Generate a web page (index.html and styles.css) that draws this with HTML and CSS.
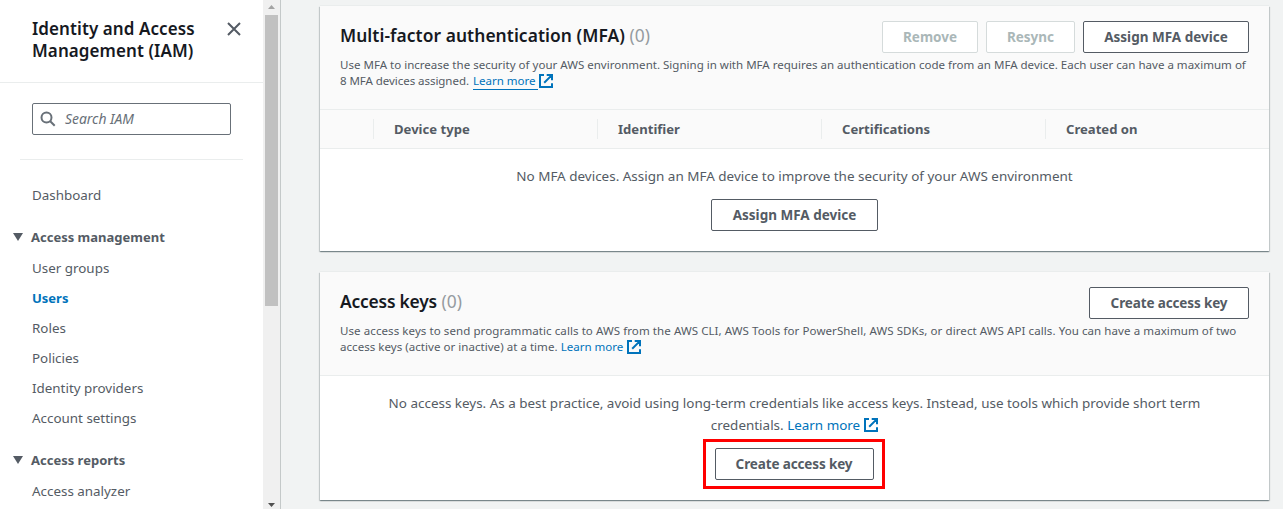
FILE: index.html
```html
<!DOCTYPE html>
<html lang="en">
<head>
<meta charset="utf-8">
<title>IAM</title>
<link rel="stylesheet" href="styles.css">
</head>
<body>
<svg class="defs" width="0" height="0">
  <symbol id="external" viewBox="0 0 14 14">
    <path d="M5 1H1v12h12V9.3M7.7 1H13v5.3M12.6 1.4L5.2 8.8" fill="none" stroke="currentColor" stroke-width="2"/>
  </symbol>
</svg>
<div class="app">
  <nav class="sidebar">
    <header class="side-head">
      <h2 class="side-title">Identity and Access<br>Management (IAM)</h2>
      <svg class="close" viewBox="0 0 14 14"><path d="M1 1l12 12M13 1L1 13" fill="none" stroke="#545b64" stroke-width="2"/></svg>
    </header>
    <div class="search">
      <svg class="search-icon" viewBox="0 0 16 16"><circle cx="6.5" cy="6.5" r="5" fill="none" stroke="#687078" stroke-width="2"/><path d="M10 10l4.7 4.7" stroke="#687078" stroke-width="2"/></svg>
      <span class="placeholder">Search IAM</span>
    </div>
    <hr class="divider">
    <a class="link dashboard">Dashboard</a>
    <div class="group"><i class="caret"></i><span>Access management</span></div>
    <a class="link">User groups</a>
    <a class="link active">Users</a>
    <a class="link">Roles</a>
    <a class="link">Policies</a>
    <a class="link">Identity providers</a>
    <a class="link">Account settings</a>
    <div class="group"><i class="caret"></i><span>Access reports</span></div>
    <a class="link">Access analyzer</a>
  </nav>
  <div class="scrollbar">
    <svg class="arrow" viewBox="0 0 7 4"><path d="M0 4h7L3.5 0z" fill="#a3a3a3"/></svg>
    <div class="thumb"></div>
    <svg class="arrow" viewBox="0 0 7 4"><path d="M0 0h7L3.5 4z" fill="#505050"/></svg>
  </div>
  <main class="main">
    <section class="card mfa">
      <header class="card-head">
        <div class="head-row">
          <h2 class="title"><span class="t-mfa">Multi-factor authentication (MFA)</span> <span class="count">(0)</span></h2>
          <div class="actions">
            <button class="btn disabled b-remove">Remove</button>
            <button class="btn disabled b-resync">Resync</button>
            <button class="btn b-assign">Assign MFA device</button>
          </div>
        </div>
        <p class="desc"><span class="d1">Use MFA to increase the security of your AWS environment. Signing in with MFA requires an authentication code from an MFA device. Each user can have a maximum of</span><br><span class="d2">8 MFA devices assigned. </span><a class="more underlined">Learn more</a><svg class="ext ext-tight"><use href="#external"/></svg></p>
      </header>
      <div class="table-head">
        <span class="cell"></span>
        <span class="cell">Device type</span>
        <span class="cell">Identifier</span>
        <span class="cell">Certifications</span>
        <span class="cell">Created on</span>
      </div>
      <div class="empty">
        <p class="empty-text">No MFA devices. Assign an MFA device to improve the security of your AWS environment</p>
        <button class="btn b-assign-lg">Assign MFA device</button>
      </div>
    </section>
    <section class="card keys">
      <header class="card-head">
        <div class="head-row">
          <h2 class="title"><span class="t-keys">Access keys</span> <span class="count">(0)</span></h2>
          <div class="actions"><button class="btn b-create">Create access key</button></div>
        </div>
        <p class="desc"><span class="d3">Use access keys to send programmatic calls to AWS from the AWS CLI, AWS Tools for PowerShell, AWS SDKs, or direct AWS API calls. You can have a maximum of two</span><br><span class="d4">access keys (active or inactive) at a time. </span><a class="more">Learn more</a><svg class="ext"><use href="#external"/></svg></p>
      </header>
      <div class="empty keys-empty">
        <p class="empty-text">No access keys. As a best practice, avoid using long-term credentials like access keys. Instead, use tools which provide short term<br>credentials. <a class="more">Learn more</a><svg class="ext"><use href="#external"/></svg></p>
        <div class="highlight"><button class="btn b-create-lg">Create access key</button></div>
      </div>
    </section>
  </main>
</div>
</body>
</html>
```
FILE: styles.css
```css
* { box-sizing: border-box; }
body {
  margin: 0;
  background: #f1f3f3;
  color: #545b64;
  font: 14px/22px "Noto Sans", "Open Sans", sans-serif;
  overflow: hidden;
}
h2, p { margin: 0; }
.defs { position: absolute; }
.app { display: flex; height: 509px; }

.sidebar { width: 263px; flex: none; background: #fff; overflow: hidden; white-space: nowrap; font-size: 13.4px; }
.side-head { display: flex; justify-content: space-between; height: 83px; padding: 18px 22px 0 32px; border-bottom: 1px solid #eaeded; }
.side-title { color: #16191f; font-size: 17px; line-height: 22px; font-weight: 600; letter-spacing: 0.08px; }
.close { width: 14px; height: 14px; margin-top: 4px; }
.search { display: flex; align-items: center; gap: 9px; width: 199px; height: 32px; margin: 20px 0 0 32px; padding-left: 7px; border: 1px solid #687078; border-radius: 2px; }
.search-icon { width: 16px; height: 16px; }
.placeholder { color: #687078; font-style: italic; font-size: 13.9px; }
.divider { width: 223px; height: 1px; margin: 24px 0 20px 20px; border: 0; background: #eaeded; }
.link { display: block; height: 30px; line-height: 30px; padding-left: 32px; }
.active { color: #0073bb; font-weight: 700; font-size: 13px; }
.group { display: flex; align-items: center; height: 30px; margin: 12px 0 1px; padding-left: 13px; gap: 8px; font-weight: 700; font-size: 13px; }
.caret { border: 5px solid transparent; border-top: 8px solid #545b64; border-bottom: 0; }

.scrollbar { display: flex; flex-direction: column; align-items: center; width: 18px; flex: none; padding: 5px 1px 2px 0; background: #f0f0f0; border-right: 1px solid #c4c9c9; }
.arrow { width: 7px; height: 4px; flex: none; }
.thumb { width: 13px; height: 291px; margin: 6px 0 auto; background: #c1c1c1; }

.main { display: flex; flex-direction: column; gap: 21px; width: 988px; padding: 6px 0 0 39px; white-space: nowrap; }
.card { background: #fff; box-shadow: 0 1px 1px 0 rgba(0,28,36,.3), 1px 1px 1px 0 rgba(0,28,36,.15), -1px 1px 1px 0 rgba(0,28,36,.15), 0 -1px 0 0 #eaeded; }
.mfa { height: 245px; }
.keys { height: 228px; }
.card-head { height: 104px; padding: 15px 20px 0; background: #fafafa; border-bottom: 1px solid #eaeded; }
.head-row { display: flex; justify-content: space-between; height: 36px; }
.title { color: #16191f; font-size: 17.4px; line-height: 28px; font-weight: 600; }
.t-mfa { letter-spacing: 0.06px; }
.t-keys { letter-spacing: -0.2px; }
.count { color: #959ba0; font-weight: 400; }
.actions { display: flex; gap: 8px; }
.btn { height: 32px; padding: 0; background: #fff; border: 1px solid #545b64; border-radius: 2px; color: #545b64; font: 700 13.5px/20px "Noto Sans", "Open Sans", sans-serif; white-space: nowrap; }
.disabled { border-color: #d5dbdb; color: #aab7b8; }
.b-remove { width: 96px; }
.b-resync { width: 89px; }
.b-assign { width: 166px; }
.b-assign-lg { width: 167px; }
.b-create { width: 160px; letter-spacing: -0.13px; }
.b-create-lg { width: 159px; letter-spacing: -0.13px; }
.desc { font-size: 11.54px; line-height: 16px; }
.d3 { letter-spacing: 0.07px; }
.d4 { letter-spacing: 0.03px; }
.more { color: #0073bb; }
.d2 { letter-spacing: -0.06px; }
.underlined { display: inline-block; height: 17px; padding-right: 2px; margin-left: 1px; border-bottom: 1px solid #0073bb; vertical-align: top; }
.ext { width: 14px; height: 14px; margin-left: 4px; vertical-align: -2px; color: #0073bb; }
.desc .ext { vertical-align: -3px; }
.desc .ext-tight { margin-left: 1px; }
.table-head { display: grid; grid-template-columns: 53px 224px 224px 224px 1fr; align-items: center; height: 39px; background: #fafafa; border-bottom: 1px solid #eaeded; font-weight: 700; font-size: 13.1px; }
.cell { height: 20px; line-height: 20px; padding-left: 20px; }
.cell + .cell { border-left: 1px solid #eaeded; }
.empty { display: flex; flex-direction: column; align-items: center; padding-top: 16px; text-align: center; }
.empty-text { font-size: 13.48px; height: 34px; }
.keys-empty .empty-text { font-size: 13.45px; height: 47px; }
.highlight { display: flex; align-items: center; justify-content: center; width: 182px; height: 50px; margin-right: 2px; padding-left: 1px; border: 3px solid #f00; }
```
